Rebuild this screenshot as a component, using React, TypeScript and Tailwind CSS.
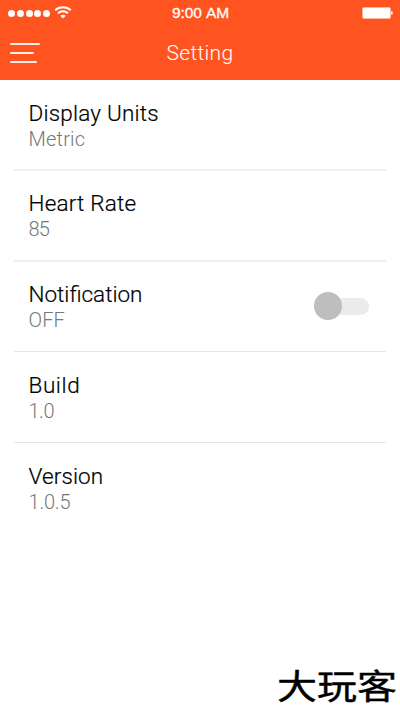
type RowData = { title: string; value: string; toggle?: boolean; rowClass: string; titleClass: string; valueClass: string };

const rows: RowData[] = [
  { title: 'Display Units', value: 'Metric', rowClass: 'h-[91px] border-b-2 border-[#f0f0f0] pt-[19px]', titleClass: 'tracking-[0.2px]', valueClass: 'tracking-[0.2px]' },
  { title: 'Heart Rate', value: '85', rowClass: 'h-[91px] border-b-2 border-[#eeeeee] pt-[18px]', titleClass: 'tracking-[0.2px]', valueClass: 'tracking-[-0.8px]' },
  { title: 'Notification', value: 'OFF', toggle: true, rowClass: 'h-[90px] border-b border-[#e6e6e6] pt-[18px]', titleClass: 'tracking-[0px]', valueClass: 'tracking-[0.1px]' },
  { title: 'Build', value: '1.0', rowClass: 'h-[91px] border-b border-[#e4e4e4] pt-[19px]', titleClass: 'tracking-[0.6px]', valueClass: 'tracking-[-0.5px]' },
  { title: 'Version', value: '1.0.5', rowClass: 'h-[91px] pt-[19px]', titleClass: 'tracking-[0.1px]', valueClass: 'tracking-[-0.2px]' },
];

function StatusBar() {
  return (
    <div className="grid h-[26px] grid-cols-3 items-center pl-2 pr-[7px]">
      <div className="flex items-center">
        <div className="flex gap-[1.8px]">
          {[0, 1, 2, 3, 4].map((i) => (
            <span key={i} className="size-[7px] rounded-full bg-white" />
          ))}
        </div>
        <svg className="-mt-[2px] ml-[3.5px]" width="18" height="14" viewBox="0 0 18 14" fill="none" stroke="white" strokeWidth="2">
          <path d="M1.2 5.2C5.4 1.3 12.6 1.3 16.8 5.2" />
          <path d="M4 8.2C6.8 5.7 11.2 5.7 14 8.2" />
          <path d="M6.3 10.7C7.8 9.5 10.2 9.5 11.7 10.7L9 13.5Z" fill="white" stroke="none" />
        </svg>
      </div>
      <div className="text-center font-['Liberation_Sans',sans-serif] text-[15.5px] leading-5 tracking-[-0.1px] [word-spacing:1px] whitespace-nowrap [-webkit-text-stroke:0.3px_white]">9:00 AM</div>
      <div className="flex items-center justify-end">
        <span className="h-3 w-[29px] rounded-[2px] border border-[#ffb69d] bg-white" />
        <span className="h-1 w-[2px] rounded-r-full bg-[#ffdacd]" />
      </div>
    </div>
  );
}

function Toggle() {
  return (
    <div className="flex h-7 w-[56px] items-center">
      <span className="z-10 size-[28px] shrink-0 rounded-full bg-[#bebebe]" />
      <span className="-ml-4 h-[17px] w-[43px] shrink-0 rounded-full bg-[#ebebeb]" />
    </div>
  );
}

export default function App() {
  return (
    <div className="flex h-[711px] w-[400px] flex-col bg-white font-[Roboto,sans-serif]">
      <header className="h-20 shrink-0 bg-[#ff541f] text-white">
        <StatusBar />
        <div className="grid h-[54px] grid-cols-[1fr_auto_1fr] items-center pl-[10px] pr-[10px]">
          <div className="flex flex-col gap-[7px]">
            <span className="h-[2px] w-[30px] rounded-full bg-[#fff0e8]" />
            <span className="h-[2px] w-6 rounded-full bg-[#fff0e8]" />
            <span className="h-[2px] w-[27px] rounded-full bg-[#fff0e8]" />
          </div>
          <h1 className="text-[21px] leading-7 font-light tracking-[0.3px]">Setting</h1>
        </div>
      </header>
      <main className="mx-[14px] flex-1">
        {rows.map((row) => (
          <div key={row.title} className={`flex justify-between pr-4 pl-[14.5px] ${row.rowClass}`}>
            <div>
              <div className={`text-[22.5px] leading-[28px] font-light text-black [-webkit-text-stroke:0.2px_black] ${row.titleClass}`}>{row.title}</div>
              <div className={`text-[20px] leading-[24px] font-light text-[#777] ${row.valueClass}`}>{row.value}</div>
            </div>
            {row.toggle && (
              <div className="pt-3">
                <Toggle />
              </div>
            )}
          </div>
        ))}
      </main>
      <footer className="flex h-[54px] justify-end pr-[3px]">
        <span lang="zh" className="inline-block h-[54px] scale-y-[0.86] font-['Noto_Sans_CJK_SC',sans-serif] text-[40px] leading-[54px] whitespace-nowrap text-black [-webkit-text-stroke:0.5px_black]">大玩客</span>
      </footer>
    </div>
  );
}
